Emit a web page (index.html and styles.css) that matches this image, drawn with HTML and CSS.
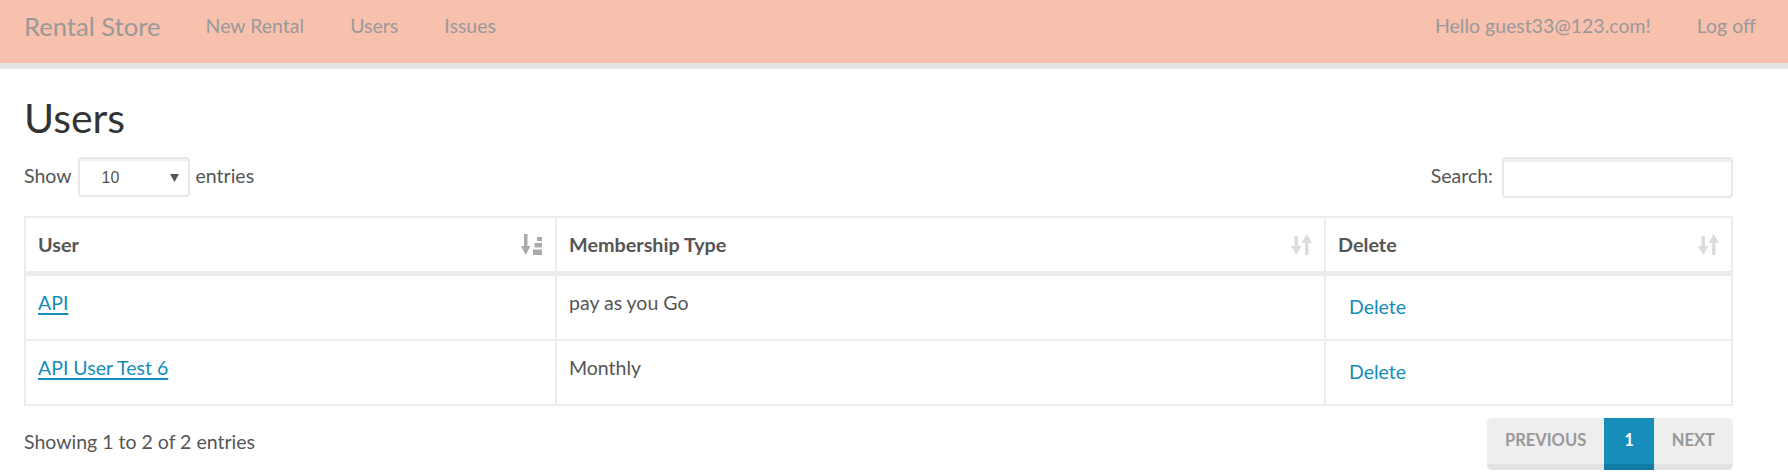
FILE: index.html
```html
<!DOCTYPE html>
<html lang="en">
<head>
<meta charset="utf-8">
<title>Users - Rental Store</title>
<link rel="stylesheet" href="styles.css">
</head>
<body>
<nav class="navbar">
  <a class="brand" href="#">Rental Store</a>
  <ul class="nav">
    <li><a href="#">New Rental</a></li>
    <li><a href="#">Users</a></li>
    <li><a href="#">Issues</a></li>
  </ul>
  <ul class="nav nav-right">
    <li><a href="#">Hello guest33@123.com!</a></li>
    <li><a href="#">Log off</a></li>
  </ul>
</nav>

<main class="container">
  <h1 class="page-title">Users</h1>

  <div class="dt-top">
    <label class="dt-length">
      <span class="dt-text">Show</span>
      <span class="select">
        <span class="select-value">10</span>
        <svg class="select-caret" width="9" height="8" viewBox="0 0 9 8"><polygon points="0,0 9,0 4.5,8" fill="#555"/></svg>
      </span>
      <span class="dt-text">entries</span>
    </label>
    <label class="dt-search">
      <span class="dt-text">Search:</span>
      <span class="input"></span>
    </label>
  </div>

  <table class="table">
    <colgroup>
      <col class="col-user">
      <col class="col-type">
      <col class="col-del">
    </colgroup>
    <thead>
      <tr>
        <th>
          <div class="th-inner">
            <span>User</span>
            <svg class="sort-icon sorted" width="22" height="21" viewBox="0 0 22 21">
              <rect x="3" y="0" width="3.5" height="13"/>
              <polygon points="0,12 9.5,12 4.75,21"/>
              <rect x="16" y="3" width="5" height="4"/>
              <rect x="13.5" y="9" width="7.5" height="4.5"/>
              <rect x="12" y="15.5" width="9" height="5.5"/>
            </svg>
          </div>
        </th>
        <th>
          <div class="th-inner">
            <span>Membership Type</span>
            <svg class="sort-icon" width="21" height="21" viewBox="0 0 21 21">
              <rect x="3.5" y="2" width="3.5" height="11"/>
              <polygon points="0,12 10.5,12 5.25,21"/>
              <polygon points="10.5,9 21,9 15.75,0"/>
              <rect x="14" y="8" width="3.5" height="13"/>
            </svg>
          </div>
        </th>
        <th>
          <div class="th-inner">
            <span>Delete</span>
            <svg class="sort-icon" width="21" height="21" viewBox="0 0 21 21">
              <rect x="3.5" y="2" width="3.5" height="11"/>
              <polygon points="0,12 10.5,12 5.25,21"/>
              <polygon points="10.5,9 21,9 15.75,0"/>
              <rect x="14" y="8" width="3.5" height="13"/>
            </svg>
          </div>
        </th>
      </tr>
    </thead>
    <tbody>
      <tr>
        <td><a class="user-link" href="#">API</a></td>
        <td>pay as you Go</td>
        <td><a class="btn-link" href="#">Delete</a></td>
      </tr>
      <tr>
        <td><a class="user-link" href="#">API User Test 6</a></td>
        <td>Monthly</td>
        <td><a class="btn-link" href="#">Delete</a></td>
      </tr>
    </tbody>
  </table>

  <div class="dt-bottom">
    <div class="dt-info">Showing 1 to 2 of 2 entries</div>
    <ul class="pagination">
      <li class="page disabled first"><a href="#">Previous</a></li>
      <li class="page active num"><a href="#">1</a></li>
      <li class="page disabled last"><a href="#">Next</a></li>
    </ul>
  </div>
</main>
</body>
</html>
```
FILE: styles.css
```css
* { box-sizing: border-box; }

html, body {
  margin: 0;
  padding: 0;
  background: #fff;
}

body {
  font-family: "Lato", "Liberation Sans", sans-serif;
  font-size: 19.5px;
  line-height: 30px;
  color: #555;
}

a { text-decoration: none; }

/* ---------- navbar ---------- */
.navbar {
  display: flex;
  align-items: flex-start;
  height: 69px;
  padding: 11px 9px 0 24px;
  background: #f8c1ae;
  border-bottom: 6px solid #e5e5e5;
}

.brand {
  font-size: 25.6px;
  line-height: 30px;
  color: #999;
  margin-right: 22px;
}

.nav {
  display: flex;
  list-style: none;
  margin: 0;
  padding: 0;
}

.nav a {
  display: block;
  padding: 0 23px;
  color: #999;
  line-height: 30px;
}

.nav-right { margin-left: auto; }

/* ---------- page ---------- */
.container {
  padding: 0 55px 0 24px;
}

.page-title {
  margin: 26px 0 17px;
  font-size: 41px;
  line-height: 45px;
  font-weight: 400;
  color: #333;
}

/* ---------- datatable controls ---------- */
.dt-top {
  display: flex;
  justify-content: space-between;
  height: 41px;
}

.dt-length, .dt-search {
  display: flex;
  align-items: flex-start;
}

.dt-length { gap: 6px; }
.dt-search { gap: 9px; }

.dt-text {
  padding-top: 4px;
}

.select {
  display: flex;
  align-items: center;
  justify-content: space-between;
  width: 112px;
  height: 40px;
  padding: 2px 9px 0 22px;
  border: 2px solid #e8e8e8;
  border-radius: 4px;
  box-shadow: inset 0 2px 0 rgba(0, 0, 0, 0.06);
  font-family: "Liberation Sans", "Arial", sans-serif;
  font-size: 16px;
  color: #555;
}

.select-caret { display: block; }

.input {
  display: block;
  width: 231px;
  height: 41px;
  border: 2px solid #e8e8e8;
  border-radius: 4px;
  box-shadow: inset 0 3px 0 rgba(0, 0, 0, 0.06);
}

/* ---------- table ---------- */
.table {
  width: 100%;
  margin-top: 18px;
  border-collapse: collapse;
  table-layout: fixed;
  border: 2px solid #ececec;
}

.col-user { width: 531px; }
.col-type { width: 769px; }

.table th, .table td {
  border: 2px solid #ececec;
  text-align: left;
  vertical-align: top;
}

.table th {
  padding: 11px 12px 12px;
  border-bottom: 5px solid #ececec;
  font-weight: 700;
  font-size: 19.8px;
  color: #555;
}

.th-inner {
  display: flex;
  align-items: center;
  justify-content: space-between;
}

.sort-icon { display: block; fill: #dcdcdc; }
.sort-icon.sorted { fill: #aaa; }

.table td {
  padding: 12px 12px 13px;
}

.user-link {
  color: #158cba;
  text-decoration: underline;
  text-decoration-thickness: 2px;
  text-underline-offset: 3px;
}

.btn-link {
  display: inline-block;
  padding: 4px 11px;
  color: #158cba;
}

/* ---------- bottom ---------- */
.dt-bottom {
  display: flex;
  justify-content: space-between;
  align-items: flex-start;
  margin-top: 12px;
}

.dt-info {
  padding-top: 9px;
}

.pagination {
  display: flex;
  list-style: none;
  margin: 0;
  padding: 0;
}

.page a {
  display: block;
  padding: 9px 18px 11px;
  line-height: 26px;
  font-size: 16.5px;
  font-weight: 700;
  text-transform: uppercase;
  color: #999;
  background: #eee;
  border-bottom: 6px solid #e2e2e2;
}

.page.num a { padding-left: 20px; padding-right: 20px; }

.page.first a { border-radius: 5px 0 0 5px; }
.page.last a { border-radius: 0 5px 5px 0; }

.page.active a {
  color: #fff;
  background: #178dbc;
  border-bottom-color: #127ba3;
}
```
